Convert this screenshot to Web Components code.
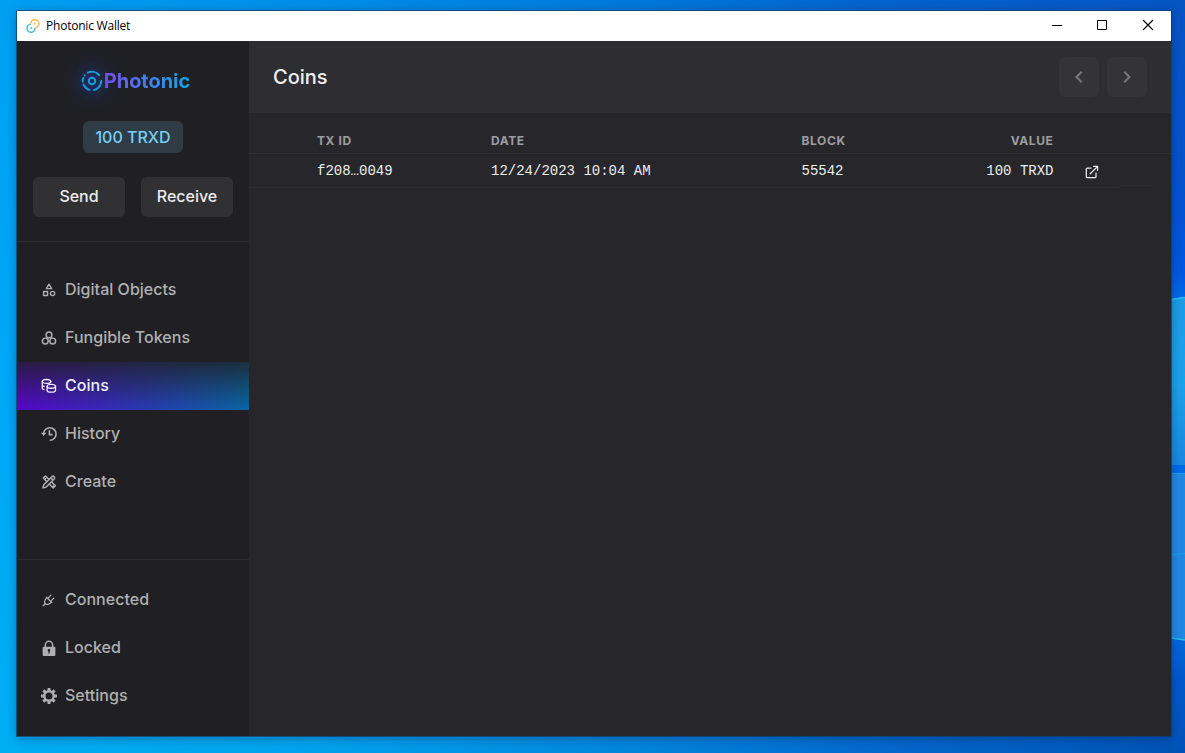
<!DOCTYPE html>
<html lang="en">
<head>
<meta charset="utf-8">
<title>Photonic Wallet</title>
<style>
html,body{margin:0;height:100%;overflow:hidden;font-family:Inter,sans-serif}
</style>
</head>
<body>
<desk-top>
  <app-window>
    <title-bar slot="bar">Photonic Wallet</title-bar>
    <side-bar slot="side">
      <brand-logo slot="top">Photonic</brand-logo>
      <balance-tag slot="top">100 TRXD</balance-tag>
      <action-row slot="top"><action-button>Send</action-button><action-button>Receive</action-button></action-row>
      <nav-item icon="shapes">Digital Objects</nav-item>
      <nav-item icon="tokens">Fungible Tokens</nav-item>
      <nav-item icon="coins" active>Coins</nav-item>
      <nav-item icon="history">History</nav-item>
      <nav-item icon="create">Create</nav-item>
      <nav-item slot="bottom" icon="plug">Connected</nav-item>
      <nav-item slot="bottom" icon="lock">Locked</nav-item>
      <nav-item slot="bottom" icon="gear">Settings</nav-item>
    </side-bar>
    <page-header>Coins</page-header>
    <coin-table></coin-table>
  </app-window>
</desk-top>
<script>
const define = (name, html) => customElements.define(name, class extends HTMLElement {
  constructor() {
    super();
    this.attachShadow({ mode: 'open' }).innerHTML = typeof html === 'function' ? html(this) : html;
  }
});

const S = 'fill="none" stroke="currentColor" stroke-linecap="round" stroke-linejoin="round"';
const icons = {
  shapes: `<g ${S} stroke-width="1.35" stroke-linejoin="miter"><path d="M8 2.2 10.6 6.6H5.4Z"/><rect x="2.6" y="9.5" width="4" height="4"/><circle cx="11.6" cy="11.5" r="2.1"/></g>`,
  tokens: `<g ${S} stroke-width="1.45"><circle cx="8" cy="4.9" r="2.9"/><circle cx="4.3" cy="11" r="2.9"/><circle cx="11.7" cy="11" r="2.9"/></g>`,
  coins: `<g ${S} stroke-width="1.35"><ellipse cx="5.5" cy="3.4" rx="4.2" ry="1.9"/><path d="M1.3 3.4v6.8c0 .6.7 1.100 1.800 1.400M1.300 6.900c0 .6.7 1.100 1.800 1.400M9.700 3.400v.8"/><ellipse cx="10.300" cy="8.300" rx="4.200" ry="1.900"/><path d="M6.100 8.300v3.900c0 1 1.900 1.900 4.200 1.900s4.200-.9 4.200-1.900V8.300"/></g>`,
  history: `<path fill="none" stroke="currentColor" stroke-width="1.6" d="M2.500 7.900A6.300 6.300 0 1 1 8.700 14.300M8.400 4.300V8.600H11.600"/><path fill="currentColor" d="M0 6.700H5.400L2.700 10Z"/>`,
  create: `<g ${S} stroke-width="1.450"><path d="M2 13.900 2.600 11 10.900 2.700a1.600 1.600 0 0 1 2.300 2.300L4.900 13.300ZM9.800 3.900l2.200 2.200"/><path d="M5.800 7.600 2.300 4.100 4.500 1.900 8 5.400M3.700 5.500l1-1M8.700 10.500l3.500 3.500 2.200-2.200-3.500-3.500M11.400 13l1-1"/></g>`,
  plug: `<g ${S} stroke-width="1.250"><path d="M2.200 13.800 4.300 11.700M6 5.700 10.300 10C8.800 12 6 13.200 4.300 11.700 2.600 10 4 7.200 6 5.700ZM5.400 5.100l5.500 5.500M7.400 5.900l2.500-2.700M10.200 8.600l2.700-2.500"/></g>`,
  lock: `<path fill="currentColor" fill-rule="evenodd" d="M2.800 6.700H3.600V5a4.400 4.400 0 0 1 8.800 0V6.700H13.200A1.200 1.200 0 0 1 14.400 7.900V14.800A1.200 1.200 0 0 1 13.200 16H2.800A1.200 1.200 0 0 1 1.600 14.800V7.900A1.200 1.200 0 0 1 2.800 6.700ZM5.100 6.700H10.900V5a2.900 2.900 0 0 0-5.800 0ZM8 9.100a1.200 1.200 0 0 0-.6 2.300V13.600H8.600V11.400A1.200 1.200 0 0 0 8 9.100Z"/>`,
  gear: `<circle cx="8" cy="8" r="4.700" fill="none" stroke="currentColor" stroke-width="2.400"/><path stroke="currentColor" stroke-width="2.900" d="M8 0V2.900M8 13.100V16M0 8H2.900M13.100 8H16M2.400 2.400 4.400 4.400M11.600 11.600 13.600 13.600M2.400 13.600 4.400 11.600M11.600 4.400 13.600 2.400"/>`
};

define('desk-top', `<style>
:host{display:block;box-sizing:border-box;width:1185px;height:753px;padding:11px 14px 17px 17px;position:relative;
background:linear-gradient(90deg,#009ff2 0,#008fe8 300px,#0079db 620px,#0561cd 900px,#0755c3 1185px) 0 0/100% 12px no-repeat,linear-gradient(180deg,#009ff2 0,#00a6f6 300px,#00adf2 753px) 0 0/18px 100% no-repeat,linear-gradient(90deg,#00adf2 0,#00a3ed 300px,#0286dc 620px,#0466c9 900px,#0053b5 1185px)}
.wall{position:absolute;right:0;top:0;width:14px;height:753px}
::slotted(*){position:relative}
</style>
<svg class="wall" viewBox="0 0 14 753"><defs><linearGradient id="a" x2="0" y2="1"><stop stop-color="#0755c3"/><stop offset=".25" stop-color="#0452cd"/><stop offset=".36" stop-color="#0057e0"/><stop offset=".4" stop-color="#006be8"/><stop offset=".84" stop-color="#006ae0"/><stop offset=".9" stop-color="#0058cb"/><stop offset="1" stop-color="#0054b8"/></linearGradient><linearGradient id="b" x2="0" y2="1"><stop stop-color="#1c9be6"/><stop offset=".5" stop-color="#1ca2e9"/><stop offset="1" stop-color="#1b86e0"/></linearGradient></defs>
<rect width="14" height="753" fill="url(#a)"/><path fill="url(#b)" d="M0 299 14 297V465H0Z"/><path fill="#2188e2" d="M0 473H14V640L0 638Z"/><path fill="none" stroke="#27bdf0" stroke-width="1.6" d="M0 299.500 14 297.500M0 638 14 640"/><path stroke="#1aa0e8" d="M0 473.500H14M0 555 14 553.500"/></svg><slot></slot>`);

define('app-window', `<style>
:host{display:grid;grid-template:30px 72px 1fr/232px 1fr;height:725px;width:1154px;background:#27272b;box-shadow:0 0 0 1px rgba(15,65,100,.75),0 2px 9px rgba(0,20,70,.4)}
slot[name=bar]::slotted(*){grid-column:1/3}
slot[name=side]::slotted(*){grid-row:2/4}
</style><slot name="bar"></slot><slot name="side"></slot><slot></slot>`);

define('title-bar', `<style>
:host{display:flex;align-items:center;background:#fff;color:#000;font:12px "Open Sans",sans-serif;padding-left:8px}
.name{flex:1;margin-left:5px;letter-spacing:-.22px;line-height:30px;height:30px}.ctl{display:flex;width:138px}.ctl svg{width:46px;height:30px}
</style><svg width="16" height="16" viewBox="0 0 16 16" fill="none" stroke-width="1.600"><path stroke="#f0c060" d="M5.900 5.500A4 4 0 1 1 10.300 9.600"/><path stroke="#4cbdd0" d="M10 10.100A4 4 0 1 1 5.800 6.300"/><circle cx="9.700" cy="5.700" r="1.100" fill="#f0c060"/><circle cx="6.200" cy="10" r="1.100" fill="#4cbdd0"/></svg>
<span class="name"><slot></slot></span><span class="ctl"><svg viewBox="0 0 46 30" stroke="#000"><path d="M19 14.500H29"/></svg><svg viewBox="0 0 46 30" fill="none" stroke="#000"><path d="M18.500 9.500H27.500V18.500H18.500Z"/></svg><svg viewBox="0 0 46 30" stroke="#000" stroke-width="1.100"><path d="M18 9 28 19M28 9 18 19"/></svg></span>`);

define('side-bar', `<style>
:host{display:flex;flex-direction:column;background:#202024;color:#b0b0b2}
.top{height:200px;border-bottom:1px solid #2e2e32;display:flex;flex-direction:column;align-items:center}
.mid{padding-top:24px;flex:1}.bottom{border-top:1px solid #2e2e32;padding:16px 0;height:144px}
</style><div class="top"><slot name="top"></slot></div><div class="mid"><slot></slot></div><div class="bottom"><slot name="bottom"></slot></div>`);

define('brand-logo', `<style>
:host{display:flex;align-items:center;height:30px;margin-top:25px;margin-left:5px;font:700 20px/30px Inter,sans-serif}
svg{overflow:visible;filter:drop-shadow(0 0 7px rgba(21,80,238,.75)) drop-shadow(0 0 12px rgba(23,68,184,.8))}
span{background:linear-gradient(90deg,#7c50ee,#3f80ee 52%,#10a7e5);-webkit-background-clip:text;background-clip:text;color:transparent;margin-left:1px;letter-spacing:-.05px}
</style><svg width="22" height="22" viewBox="0 0 22 22" fill="none" stroke="#169bdd" stroke-width="2" stroke-linecap="round"><circle cx="11" cy="11" r="3.200"/><path d="M6.900 2.700A9.300 9.300 0 0 1 18.100 5M20.200 10.800A9.300 9.300 0 0 1 13 20M8.500 19.900A9.300 9.300 0 0 1 2.500 14.600M1.700 11.400A9.300 9.300 0 0 1 2.200 8"/><path d="M3.700 5.300h.01M18.800 15.800h.01" stroke-width="2.200"/></svg><span><slot></slot></span>`);

define('balance-tag', `<style>
:host{display:block;margin-top:25px;width:100px;height:32px;border-radius:6px;background:#2f3c46;color:#79cef5;text-align:center;font:500 16px/32px Inter,sans-serif}
</style><slot></slot>`);
define('action-row', `<style>:host{display:flex;gap:16px;margin-top:24px}</style><slot></slot>`);
define('action-button', `<style>
:host{display:block;width:92px;height:40px;border-radius:6px;background:#313134;color:#ebebec;text-align:center;font:500 16px/39px Inter,sans-serif}
</style><slot></slot>`);

define('nav-item', el => `<style>
:host{display:flex;align-items:center;gap:8px;height:48px;padding-left:24px;font:500 16px/46px Inter,sans-serif;letter-spacing:.02px}
:host([active]){color:#f0edfb;background:linear-gradient(180deg,rgba(32,32,36,.8),rgba(32,32,36,0)),linear-gradient(90deg,#5606cc,#2939b5 55%,#0768a5)}
svg{flex:none;overflow:visible}
span{height:48px}
</style><svg width="16" height="16" viewBox="0 0 16 16">${icons[el.getAttribute('icon')]}</svg><span><slot></slot></span>`);

define('page-header', `<style>
:host{display:flex;align-items:center;gap:8px;background:#2d2d32;padding:0 24px;color:#f0f0f1;font:500 20px/30px Inter,sans-serif}
.t{flex:1}.b{width:40px;height:40px;border-radius:6px;background:#333338}
</style><span class="t"><slot></slot></span>
<svg class="b" viewBox="0 0 40 40" fill="none" stroke="#77777b" stroke-width="2"><path d="M22.700 14.700 17.500 20 22.700 25.300"/></svg>
<svg class="b" viewBox="0 0 40 40" fill="none" stroke="#77777b" stroke-width="2"><path d="M17.300 14.700 22.500 20 17.300 25.300"/></svg>`);

define('coin-table', `<style>
:host{display:block;color:#ececee}
.row{display:grid;grid-template-columns:242px 310.500px 1fr 153px 65.500px 52px}
.row>:first-child{padding-left:68px}
.head{height:40px;border-bottom:1px solid #2f2f33;font:700 12px/55px Inter,sans-serif;letter-spacing:.6px;color:#9d9da0}
.data{font:14px/35px "Liberation Mono",monospace;height:34px}
.data>*{border-bottom:1px solid #2d2d31;height:33px}
.v{text-align:right}.data .link{padding-left:31.500px}
.data .end{height:31px;width:32px}
svg{display:block;margin-top:11px}
</style>
<div class="row head"><span>TX ID</span><span>DATE</span><span>BLOCK</span><span class="v">VALUE</span></div>
<div class="row data"><span>f208…0049</span><span>12/24/2023 10:04 AM</span><span>55542</span><span class="v">100 TRXD</span><span class="link"><svg width="14" height="14" viewBox="0 0 14 14" fill="none" stroke="currentColor" stroke-width="1.250" stroke-linecap="round" stroke-linejoin="round"><path d="M6 3H2.300A1 1 0 0 0 1.300 4V11.700A1 1 0 0 0 2.300 12.700H10A1 1 0 0 0 11 11.700V8M5.200 8.800 12.400 1.600M8.700 1.400H12.600V5.300"/></svg></span><span class="end"></span></div>`);
</script>
</body>
</html>
